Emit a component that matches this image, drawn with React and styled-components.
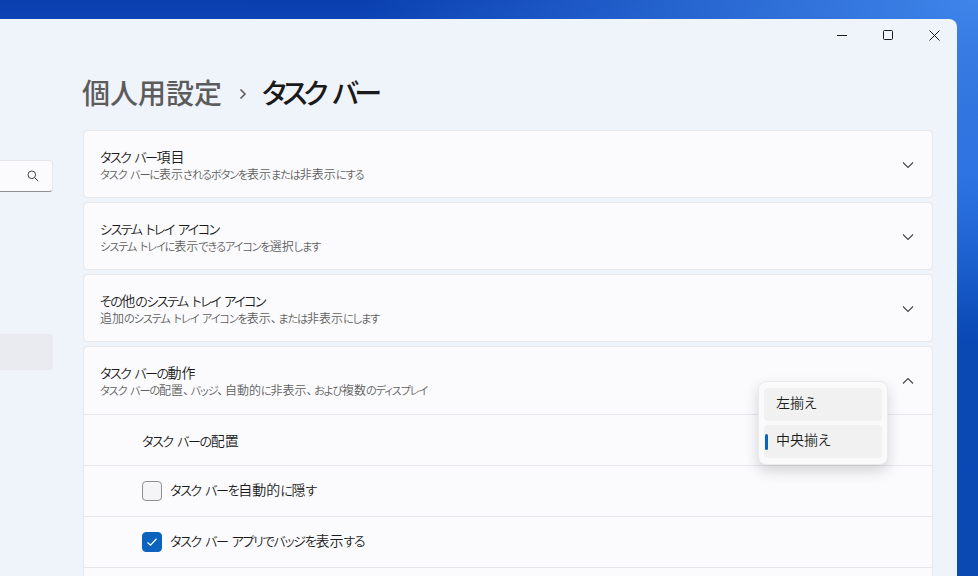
import React from 'react'
import styled, { createGlobalStyle } from 'styled-components'

const GlobalStyle = createGlobalStyle`
  html, body {
    margin: 0;
    padding: 0;
    height: 100%;
    overflow: hidden;
  }
  body {
    font-family: "Noto Sans CJK JP", "Noto Sans", sans-serif;
    font-feature-settings: "palt";
    font-weight: 350;
    color: #1b1b1b;
  }
`

const Desktop = styled.div`
  width: 978px;
  height: 576px;
  overflow: hidden;
  padding-top: 19px;
  box-sizing: border-box;
  background:
    radial-gradient(620px 320px at 100% 0%, #3f85ea 0%, rgba(63, 133, 234, 0) 100%),
    linear-gradient(180deg, #0a3fb0 0%, #1f66dc 30%, #0a49b4 60%, #0a48b2 100%);
`

const Window = styled.div`
  width: 957px;
  height: 557px;
  display: flex;
  flex-direction: column;
  background: #eff3fa;
  border-top-right-radius: 8px;
  overflow: hidden;
`

const TitleBar = styled.div`
  height: 32px;
  display: flex;
  justify-content: flex-end;
  flex-shrink: 0;
`

const WinButton = styled.div`
  width: 46px;
  height: 32px;
  display: flex;
  align-items: center;
  justify-content: center;
  color: #1b1b1b;
`

const Body = styled.div`
  flex: 1;
  display: flex;
  min-height: 0;
`

const Sidebar = styled.div`
  width: 53px;
  flex-shrink: 0;
  display: flex;
  flex-direction: column;
`

const SearchBox = styled.div`
  margin-top: 109px;
  height: 32px;
  box-sizing: border-box;
  display: flex;
  align-items: center;
  justify-content: flex-end;
  padding-right: 13px;
  background: #fbfbfd;
  border: 1px solid #e6e7ea;
  border-left: none;
  border-bottom-color: #8f8f8f;
  border-radius: 0 4px 4px 0;
  color: #444;
`

const NavItem = styled.div`
  margin-top: 142px;
  height: 36px;
  background: #e9ebf0;
  border-radius: 0 4px 4px 0;
`

const Main = styled.div`
  flex: 1;
  min-width: 0;
  padding: 0 24px 0 30px;
`

const PageTitle = styled.div`
  height: 77px;
  padding-top: 2px;
  display: flex;
  align-items: center;
  margin-left: -1px;
  font-size: 28px;
  font-weight: 500;
  line-height: 40px;
`

const Crumb = styled.span`
  color: #5c5c5c;
`

const Separator = styled.span`
  display: flex;
  margin: 4px 15px 0 17px;
  color: #5c5c5c;
`

const Current = styled.span`
  color: #1a1a1a;
  letter-spacing: -4.2px;
  word-spacing: 6px;
`

const CardList = styled.div`
  display: flex;
  flex-direction: column;
  gap: 4px;
`

const Card = styled.div`
  background: #fbfbfd;
  border: 1px solid #e5e7ec;
  border-radius: 4px;
`

const CardHeader = styled.div`
  height: ${props => (props.$expanded ? '67px' : '66px')};
  box-sizing: border-box;
  display: flex;
  align-items: center;
  justify-content: space-between;
  padding: 1px 18px 0 16px;
`

const CardText = styled.div`
  display: flex;
  flex-direction: column;
  gap: 1px;
`

const Chevron = styled.span`
  display: flex;
  color: #444;
`

const SubRow = styled.div`
  height: 50px;
  display: flex;
  align-items: center;
  gap: 8px;
  padding-left: 58px;
  border-top: 1px solid #e5e7ec;
  font-size: 14px;
`

const RowLabel = styled.span`
  margin-bottom: ${props => (props.$raised ? '5px' : '0')};
`

const CheckBox = styled.span`
  width: 20px;
  height: 20px;
  box-sizing: border-box;
  display: flex;
  align-items: center;
  justify-content: center;
  border-radius: 4px;
  border: 1px solid ${props => (props.$checked ? '#0b63bd' : '#8e8e8e')};
  background: ${props => (props.$checked ? '#0b63bd' : '#f5f5f7')};
  color: #fff;
`

const Flyout = styled.div`
  position: absolute;
  left: 758px;
  top: 381px;
  width: 130px;
  height: 84px;
  box-sizing: border-box;
  padding: 6px 5px 5px;
  display: flex;
  flex-direction: column;
  gap: 4px;
  background: #fafafa;
  border: 1px solid #eaeaea;
  border-radius: 8px;
  box-shadow: 0 6px 14px rgba(0, 0, 0, 0.16);
`

const FlyoutItem = styled.div`
  position: relative;
  height: 33px;
  box-sizing: border-box;
  padding: 0 0 5px 12px;
  display: flex;
  align-items: center;
  background: #f1f1f1;
  border-radius: 4px;
  font-size: 14px;
  color: #1b1b1b;
`

const Indicator = styled.span`
  position: absolute;
  left: 1px;
  top: 9px;
  width: 3px;
  height: 16px;
  border-radius: 2px;
  background: #0b63bd;
`

// Yu Gothic UI sets kana much tighter than Noto, kanji keep their full width
const Kana = styled.span`
  font-size: 0.93em;
  letter-spacing: -0.1em;
  word-spacing: 0.2em;
`

const Comma = styled.span`
  margin-right: 1.5px;
`

const CardTitle = styled.div`
  font-size: 14px;
  line-height: 17px;
  color: #1b1b1b;

  ${Kana} {
    letter-spacing: -0.115em;
  }
`

const CardDesc = styled.div`
  font-size: 12px;
  line-height: 16px;
  color: #5f5f5f;
`

const Jp = ({ children }) =>
  children.split(/([ァ-ヶーぁ-ん ]+|、)/).map((part, i) => {
    if (i % 2 === 0) return part
    return part === '、' ? <Comma key={i}>{part}</Comma> : <Kana key={i}>{part}</Kana>
  })

const ChevronIcon = ({ up }) => (
  <svg width="12" height="8" viewBox="0 0 12 8" fill="none" stroke="currentColor" strokeWidth="1.1">
    <path d={up ? 'M1 6.5 L6 1.5 L11 6.5' : 'M1 1.5 L6 6.5 L11 1.5'} />
  </svg>
)

const sections = [
  { title: 'タスク バー項目', desc: 'タスク バーに表示されるボタンを表示または非表示にする' },
  { title: 'システム トレイ アイコン', desc: 'システム トレイに表示できるアイコンを選択します' },
  { title: 'その他のシステム トレイ アイコン', desc: '追加のシステム トレイ アイコンを表示、または非表示にします' },
]

export default function App() {
  return (
    <Desktop>
      <GlobalStyle />
      <Window>
        <TitleBar>
          <WinButton>
            <svg width="10" height="10" viewBox="0 0 10 10" stroke="currentColor" fill="none">
              <path d="M0 5.5 H10" />
            </svg>
          </WinButton>
          <WinButton>
            <svg width="10" height="10" viewBox="0 0 10 10" stroke="currentColor" fill="none">
              <rect x="0.5" y="0.5" width="9" height="9" rx="1" />
            </svg>
          </WinButton>
          <WinButton>
            <svg width="11" height="11" viewBox="0 0 11 11" stroke="currentColor" fill="none">
              <path d="M0.5 0.5 L10.5 10.5 M10.5 0.5 L0.5 10.5" />
            </svg>
          </WinButton>
        </TitleBar>
        <Body>
          <Sidebar>
            <SearchBox>
              <svg width="12" height="12" viewBox="0 0 12 12" fill="none" stroke="currentColor" strokeWidth="1">
                <circle cx="4.8" cy="4.8" r="3.8" />
                <path d="M7.6 7.6 L11.2 11.2" />
              </svg>
            </SearchBox>
            <NavItem />
          </Sidebar>
          <Main>
            <PageTitle>
              <Crumb>個人用設定</Crumb>
              <Separator>
                <svg width="8" height="12" viewBox="0 0 8 12" fill="none" stroke="currentColor" strokeWidth="1.6">
                  <path d="M1.5 1.5 L6 6 L1.5 10.5" />
                </svg>
              </Separator>
              <Current>タスク バー</Current>
            </PageTitle>
            <CardList>
              {sections.map(s => (
                <Card key={s.title}>
                  <CardHeader>
                    <CardText>
                      <CardTitle><Jp>{s.title}</Jp></CardTitle>
                      <CardDesc><Jp>{s.desc}</Jp></CardDesc>
                    </CardText>
                    <Chevron><ChevronIcon /></Chevron>
                  </CardHeader>
                </Card>
              ))}
              <Card>
                <CardHeader $expanded>
                  <CardText>
                    <CardTitle><Jp>タスク バーの動作</Jp></CardTitle>
                    <CardDesc><Jp>タスク バーの配置、バッジ、自動的に非表示、および複数のディスプレイ</Jp></CardDesc>
                  </CardText>
                  <Chevron><ChevronIcon up /></Chevron>
                </CardHeader>
                <SubRow>
                  <RowLabel><Jp>タスク バーの配置</Jp></RowLabel>
                </SubRow>
                <SubRow>
                  <CheckBox />
                  <RowLabel $raised><Jp>タスク バーを自動的に隠す</Jp></RowLabel>
                </SubRow>
                <SubRow>
                  <CheckBox $checked>
                    <svg width="12" height="10" viewBox="0 0 12 10" fill="none" stroke="currentColor" strokeWidth="1.3">
                      <path d="M1.5 5.5 L4.5 8.2 L10.5 1.8" />
                    </svg>
                  </CheckBox>
                  <RowLabel $raised><Jp>タスク バー アプリでバッジを表示する</Jp></RowLabel>
                </SubRow>
                <SubRow />
              </Card>
            </CardList>
          </Main>
        </Body>
      </Window>
      <Flyout>
        <FlyoutItem>左揃え</FlyoutItem>
        <FlyoutItem>
          <Indicator />
          中央揃え
        </FlyoutItem>
      </Flyout>
    </Desktop>
  )
}
